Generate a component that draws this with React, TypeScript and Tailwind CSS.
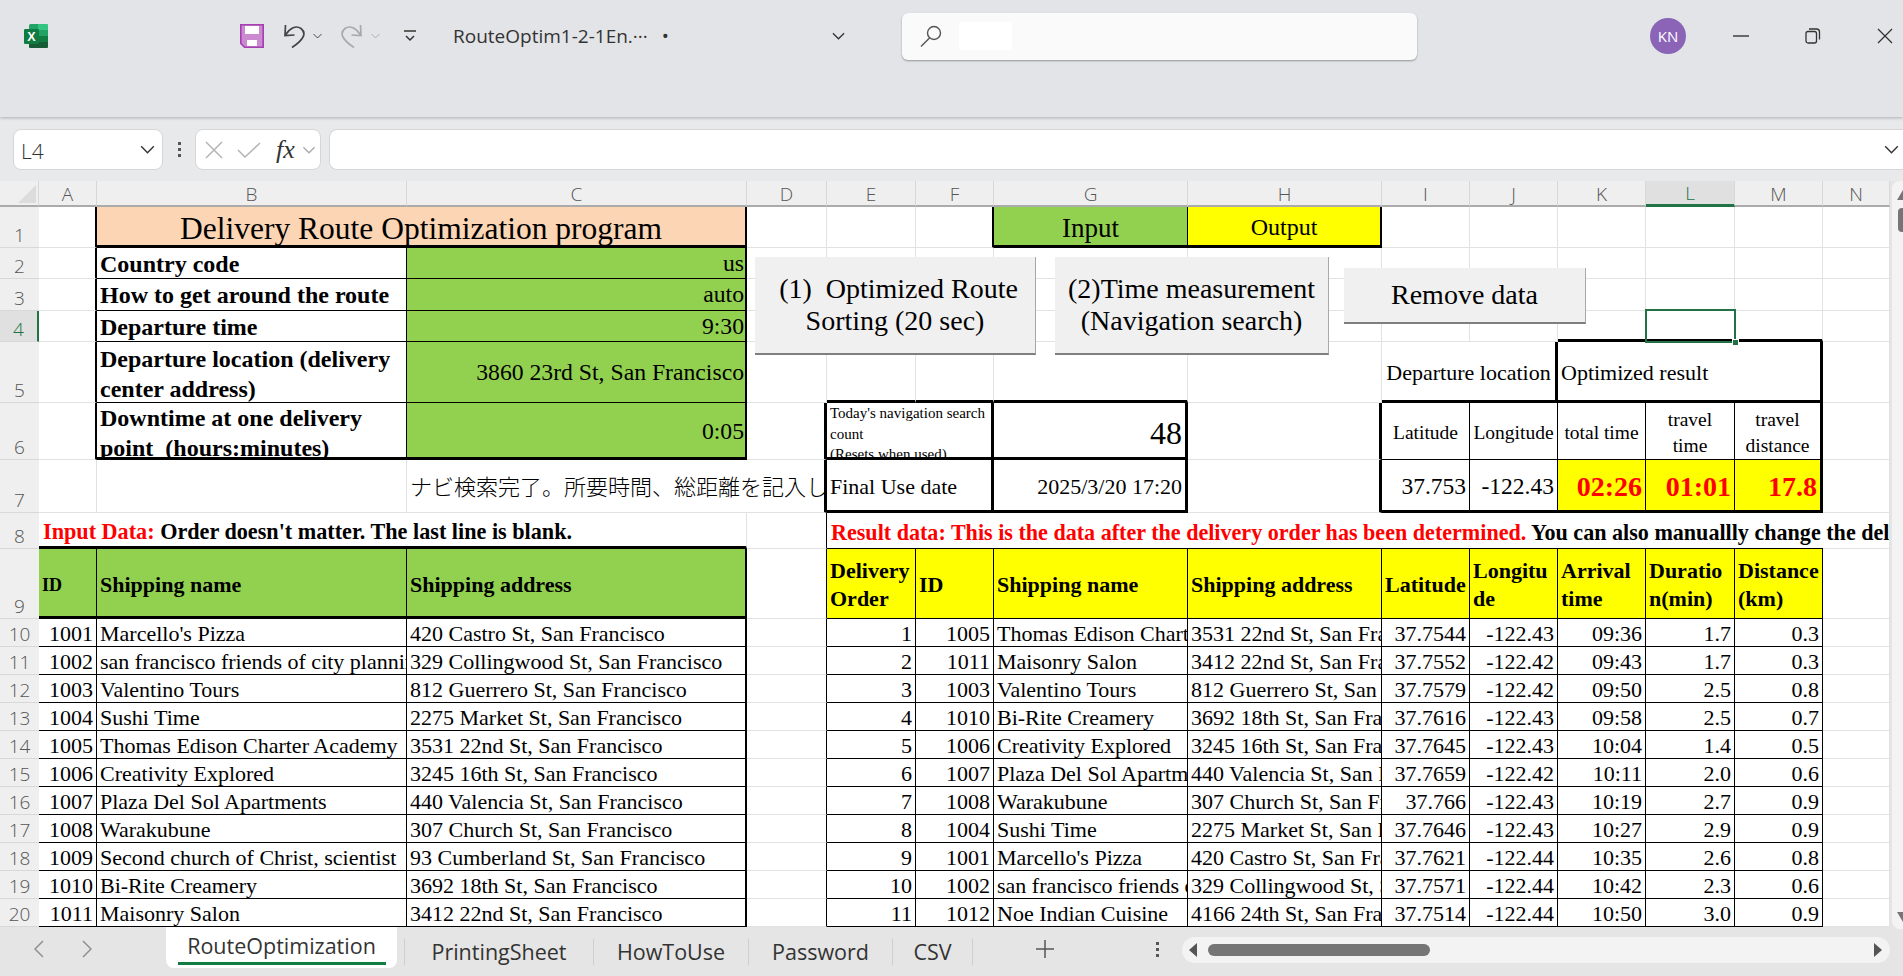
import { twMerge } from "tailwind-merge";
import type { ReactNode } from "react";

const ui = "font-['Open_Sans',sans-serif]";

// 1つのセル。罫線の既定値はシートの薄いグリッド線
function C({ className = "", children }: { className?: string; children?: ReactNode }) {
  return (
    <div
      className={twMerge(
        "flex items-center overflow-hidden whitespace-nowrap min-w-0 px-[3px] pt-[3px] text-[22px] leading-[28px] text-black border-r border-b border-[#e2e2e2]",
        className
      )}
    >
      {children}
    </div>
  );
}

function RowHead({ n, active }: { n: number; active?: boolean }) {
  return (
    <div
      className={twMerge(
        "flex items-end justify-center border-b border-[#d8d8d8] bg-[#efefef] text-[19px] leading-[24px] text-[#555] font-light overflow-hidden",
        ui,
        active && "bg-[#e0e0e0] text-[#217346] border-r-2 border-r-[#217346]"
      )}
    >
      {n}
    </div>
  );
}

function ColHead({ l, active }: { l: string; active?: boolean }) {
  return (
    <div
      className={twMerge(
        "flex items-center justify-center pt-[2px] border-r border-b-2 border-r-[#d8d8d8] border-b-[#ababab] bg-[#efefef] text-[19px] text-[#555] font-light",
        ui,
        active && "bg-[#e0e0e0] text-[#217346] border-b-[3px] border-b-[#217346]"
      )}
    >
      {l}
    </div>
  );
}

function Chevron({ className = "" }: { className?: string }) {
  return (
    <svg viewBox="0 0 16 10" className={className} fill="none" stroke="currentColor" strokeWidth="1.6">
      <path d="M1 1.5 8 8.5 15 1.5" />
    </svg>
  );
}

function ExcelLogo() {
  return (
    <svg viewBox="0 0 24 24" className="w-6 h-6 shrink-0">
      <rect x="5" y="0" width="19" height="24" rx="1.5" fill="#21a366" />
      <path d="M14 0h8.5A1.5 1.5 0 0 1 24 1.5V6H14z" fill="#33c481" />
      <rect x="14" y="12" width="10" height="6" fill="#107c41" />
      <path d="M5 18h19v4.5a1.5 1.5 0 0 1-1.5 1.5h-16A1.5 1.5 0 0 1 5 22.5z" fill="#185c37" />
      <rect x="0" y="5" width="15" height="15" rx="1.2" fill="#107c41" />
      <text x="7.5" y="17" textAnchor="middle" fontSize="12.5" fontWeight="700" fontFamily="Liberation Sans" fill="#fff">
        X
      </text>
    </svg>
  );
}

function SaveIcon() {
  return (
    <svg viewBox="0 0 24 24" className="w-6 h-6 shrink-0 ml-[192px]">
      <path d="M.8.8h22.4v22.4H4.5L.8 19.5z" fill="#cb8ad0" stroke="#a53eb0" strokeWidth="1.6" />
      <rect x="5" y="2" width="14" height="8" fill="#fff" />
      <rect x="7" y="16" width="10" height="6" fill="#fff" />
    </svg>
  );
}

function UndoIcon({ flip, color }: { flip?: boolean; color: string }) {
  return (
    <svg
      viewBox="0 0 24 24"
      className={twMerge("w-6 h-6 shrink-0", flip && "-scale-x-100")}
      fill="none"
      stroke={color}
      strokeWidth="1.7"
    >
      <path d="M2.5 1 2 11.5 11.5 11" />
      <path d="M2.5 11C7 4 13 1 18 4.5c5 4 4.5 10-9 19" />
    </svg>
  );
}

const green = "bg-[#92d050]";
const yellow = "bg-[#ffff00]";

const inputRows = [
  ["1001", "Marcello's Pizza", "420 Castro St, San Francisco"],
  ["1002", "san francisco friends of city planning", "329 Collingwood St, San Francisco"],
  ["1003", "Valentino Tours", "812 Guerrero St, San Francisco"],
  ["1004", "Sushi Time", "2275 Market St, San Francisco"],
  ["1005", "Thomas Edison Charter Academy", "3531 22nd St, San Francisco"],
  ["1006", "Creativity Explored", "3245 16th St, San Francisco"],
  ["1007", "Plaza Del Sol Apartments", "440 Valencia St, San Francisco"],
  ["1008", "Warakubune", "307 Church St, San Francisco"],
  ["1009", "Second church of Christ, scientist", "93 Cumberland St, San Francisco"],
  ["1010", "Bi-Rite Creamery", "3692 18th St, San Francisco"],
  ["1011", "Maisonry Salon", "3412 22nd St, San Francisco"],
];

const resultRows = [
  ["1", "1005", "Thomas Edison Charter Academy", "3531 22nd St, San Francisco", "37.7544", "-122.43", "09:36", "1.7", "0.3"],
  ["2", "1011", "Maisonry Salon", "3412 22nd St, San Francisco", "37.7552", "-122.42", "09:43", "1.7", "0.3"],
  ["3", "1003", "Valentino Tours", "812 Guerrero St, San Francisco", "37.7579", "-122.42", "09:50", "2.5", "0.8"],
  ["4", "1010", "Bi-Rite Creamery", "3692 18th St, San Francisco", "37.7616", "-122.43", "09:58", "2.5", "0.7"],
  ["5", "1006", "Creativity Explored", "3245 16th St, San Francisco", "37.7645", "-122.43", "10:04", "1.4", "0.5"],
  ["6", "1007", "Plaza Del Sol Apartments", "440 Valencia St, San Francisco", "37.7659", "-122.42", "10:11", "2.0", "0.6"],
  ["7", "1008", "Warakubune", "307 Church St, San Francisco", "37.766", "-122.43", "10:19", "2.7", "0.9"],
  ["8", "1004", "Sushi Time", "2275 Market St, San Francisco", "37.7646", "-122.43", "10:27", "2.9", "0.9"],
  ["9", "1001", "Marcello's Pizza", "420 Castro St, San Francisco", "37.7621", "-122.44", "10:35", "2.6", "0.8"],
  ["10", "1002", "san francisco friends of city planning", "329 Collingwood St, San Francisco", "37.7571", "-122.44", "10:42", "2.3", "0.6"],
  ["11", "1012", "Noe Indian Cuisine", "4166 24th St, San Francisco", "37.7514", "-122.44", "10:50", "3.0", "0.9"],
];

const settings = [
  { n: 2, label: "Country code", value: "us" },
  { n: 3, label: "How to get around the route", value: "auto" },
  { n: 4, label: "Departure time", value: "9:30" },
];

const colLetters = ["A", "B", "C", "D", "E", "F", "G", "H", "I", "J", "K", "L", "M", "N"];

const labelB = "border-r-black border-b-black font-bold text-[24px] pt-[1px]";
const valueC = "justify-end text-[23.7px] pr-[1px] pt-[1px] bg-[#92d050] border-r-2 border-r-black border-b-black";
const aEdge = "border-r-2 border-r-black";
const thickB = "border-b-[3px] border-b-black";
const thickR = "border-r-[3px] border-r-black";
const thinBox = "border-r-black border-b-black";
const small = "justify-center text-center text-[19.5px] leading-[26px]";
const btn =
  "absolute flex items-center justify-center text-center bg-[#f0f0f0] border-r border-b-2 border-r-[#a8a8a8] border-b-[#7f7f7f] text-[28px] leading-[32px] text-black";

function Sheet() {
  return (
    <div className="relative w-[1890px] h-[746px] overflow-hidden bg-white font-['Liberation_Serif',serif]">
      <div className="grid grid-cols-[39px_58px_310px_340px_80px_89px_78px_194px_194px_88px_88px_88px_89px_88px_67px] grid-rows-[26px_41px_31px_32px_31px_61px_57px_53px_36px_70px_repeat(11,28px)]">
        {/* 列見出し */}
        <div className="relative bg-[#efefef] border-r border-b-2 border-r-[#d8d8d8] border-b-[#ababab]">
          <svg viewBox="0 0 18 18" className="absolute left-[18px] top-[4px] w-[18px] h-[18px]">
            <path d="M18 0V18H0z" fill="#dcdcdc" />
          </svg>
        </div>
        {colLetters.map((l) => (
          <ColHead key={l} l={l} active={l === "L"} />
        ))}

        {/* 1行目 */}
        <RowHead n={1} />
        <C className={aEdge} />
        <C className={`col-span-2 justify-center bg-[#fcd5b4] pt-[5px] text-[31.5px] border-r-2 border-r-black ${thickB}`}>
          Delivery Route Optimization program
        </C>
        <C />
        <C />
        <C className={aEdge} />
        <C className={`${green} justify-center pt-[4px] text-[27px] border-r-black ${thickB}`}>Input</C>
        <C className={`${yellow} justify-center pt-[2px] text-[24px] ${aEdge} ${thickB}`}>Output</C>
        <C />
        <C />
        <C />
        <C />
        <C />
        <C />

        {/* 2〜4行目 */}
        {settings.map((s) => (
          <div key={s.n} className="contents">
            <RowHead n={s.n} active={s.n === 4} />
            <C className={aEdge} />
            <C className={labelB}>{s.label}</C>
            <C className={valueC}>{s.value}</C>
            <C />
            <C />
            <C />
            <C />
            <C />
            <C />
            <C />
            <C className={s.n === 4 ? thickB : ""} />
            <C className={s.n === 4 ? thickB : ""} />
            <C className={s.n === 4 ? thickB : ""} />
            <C />
          </div>
        ))}

        {/* 5行目 */}
        <RowHead n={5} />
        <C className={aEdge} />
        <C className={`${labelB} pt-[3px] leading-[30px]`}>
          <span>
            Departure location (delivery
            <br />
            center address)
          </span>
        </C>
        <C className={valueC}>3860 23rd St, San Francisco</C>
        <C />
        <C className={thickB} />
        <C className={thickB} />
        <C className={thickB} />
        <C />
        <C className={`col-span-2 justify-center text-[22px] ${thickR} ${thickB}`}>Departure location</C>
        <C className={`col-span-3 text-[22px] ${thickR} ${thickB}`}>Optimized result</C>
        <C />

        {/* 6行目 */}
        <RowHead n={6} />
        <C className={aEdge} />
        <C className={`${labelB} ${thickB} pt-[5px] leading-[30px]`}>
          <span>
            Downtime at one delivery
            <br />
            point&nbsp; (hours:minutes)
          </span>
        </C>
        <C className={`${valueC} pt-[3px] ${thickB}`}>0:05</C>
        <C className={thickR} />
        <C className={`col-span-2 items-start pt-0 whitespace-normal text-[15px] leading-[20.5px] ${thickR} ${thickB}`}>
          <span>
            Today's navigation search
            <br />
            count
            <br />
            (Resets when used)
          </span>
        </C>
        <C className={`justify-end pt-[5px] text-[32px] ${thickR} ${thickB}`}>48</C>
        <C className={thickR} />
        <C className={`${small} ${thinBox}`}>Latitude</C>
        <C className={`${small} ${thinBox}`}>Longitude</C>
        <C className={`${small} ${thinBox}`}>total time</C>
        <C className={`${small} whitespace-normal ${thinBox}`}>travel time</C>
        <C className={`${small} whitespace-normal border-b-black ${thickR}`}>
          <span>
            travel
            <br />
            distance
          </span>
        </C>
        <C />

        {/* 7行目 */}
        <RowHead n={7} />
        <C />
        <C />
        <C className="overflow-visible border-r-0 pt-0 pb-[2px] text-[22px] font-light font-['Noto_Sans_CJK_JP',sans-serif]">
          ナビ検索完了。所要時間、総距離を記入し
        </C>
        <C className={thickR} />
        <C className={`col-span-2 text-[22px] ${thickR} ${thickB}`}>Final Use date</C>
        <C className={`justify-end text-[22px] ${thickR} ${thickB}`}>2025/3/20 17:20</C>
        <C className={thickR} />
        <C className={`justify-end text-[23.5px] border-r-black ${thickB}`}>37.753</C>
        <C className={`justify-end text-[23.5px] border-r-black ${thickB}`}>-122.43</C>
        <C className={`${yellow} justify-end text-[28px] font-bold text-[#ff0000] border-r-black ${thickB}`}>02:26</C>
        <C className={`${yellow} justify-end text-[28px] font-bold text-[#ff0000] border-r-black ${thickB}`}>01:01</C>
        <C className={`${yellow} justify-end text-[28px] font-bold text-[#ff0000] ${thickR} ${thickB}`}>17.8</C>
        <C />

        {/* 8行目 */}
        <RowHead n={8} />
        <C className={`col-span-3 font-bold pl-[4px] pt-[5px] text-[22.2px] ${thickB}`}>
          <span>
            <span className="text-[#ff0000]">Input Data:</span> Order doesn't matter. The last line is blank.
          </span>
        </C>
        <C className="border-r-black" />
        <C className="col-span-9 overflow-visible font-bold pl-[4px] pt-[5px] text-[22.1px] border-r-0 border-b-black">
          <span>
            <span className="text-[#ff0000]">Result data: This is the data after the delivery order has been determined.</span> You can also manuallly change the delivery order
          </span>
        </C>
        <C />

        {/* 9行目 */}
        <RowHead n={9} />
        <C className={`${green} font-bold pt-[5px] text-[18px] border-r-black ${thickB}`}>ID</C>
        <C className={`${green} font-bold pt-[5px] border-r-black ${thickB}`}>Shipping name</C>
        <C className={`${green} font-bold pt-[5px] ${aEdge} ${thickB}`}>Shipping address</C>
        <C className="border-r-black" />
        {[
          <>Delivery<br />Order</>,
          <>ID</>,
          <>Shipping name</>,
          <>Shipping address</>,
          <>Latitude</>,
          <>Longitu<br />de</>,
          <>Arrival<br />time</>,
          <>Duratio<br />n(min)</>,
          <>Distance<br />(km)</>,
        ].map((h, i) => (
          <C key={i} className={`${yellow} font-bold ${thinBox}`}>
            <span>{h}</span>
          </C>
        ))}
        <C />

        {/* 10〜20行目 */}
        {inputRows.map((row, i) => (
          <div key={row[0]} className="contents">
            <RowHead n={i + 10} />
            <C className={`justify-end ${thinBox}`}>{row[0]}</C>
            <C className={thinBox}>{row[1]}</C>
            <C className={`${aEdge} border-b-black`}>{row[2]}</C>
            <C className="border-r-black" />
            {resultRows[i].map((v, j) => (
              <C key={j} className={`${j === 2 || j === 3 ? "" : "justify-end"} ${thinBox}`}>
                {v}
              </C>
            ))}
            <C />
          </div>
        ))}
      </div>

      {/* シート上のボタンと選択セル */}
      <button className={`${btn} left-[755px] top-[76px] w-[281px] h-[98px]`}>
        &nbsp;(1)&nbsp; Optimized Route
        <br />
        Sorting (20 sec)
      </button>
      <button className={`${btn} left-[1055px] top-[76px] w-[274px] h-[98px]`}>
        (2)Time measurement
        <br />
        (Navigation search)
      </button>
      <button className={`${btn} left-[1344px] top-[87px] w-[242px] h-[56px]`}>Remove data</button>
      <div className="absolute left-[1645px] top-[128px] w-[91px] h-[34px] border-2 border-[#217346]" />
      <div className="absolute left-[1732px] top-[158px] w-[7px] h-[7px] bg-[#217346] border border-white" />
    </div>
  );
}

function VScroll() {
  return (
    <div className="flex-1 h-[746px] bg-[#e5e5e5] pl-[2px]">
      <div className="relative h-[748px] bg-[#f3f3f3] rounded-l-lg overflow-hidden">
        <svg viewBox="0 0 12 10" className="absolute left-[5px] top-[9px] w-3 h-[10px]">
          <path d="M6 0 12 10H0z" fill="#757575" />
        </svg>
        <div className="absolute left-[6px] top-[27px] w-3 h-6 rounded-l bg-[#757575]" />
        <svg viewBox="0 0 12 10" className="absolute left-[5px] top-[731px] w-3 h-[10px]">
          <path d="M0 0H12L6 10z" fill="#757575" />
        </svg>
      </div>
    </div>
  );
}

function TabBar() {
  const tabs = [
    { t: "PrintingSheet", w: "w-[189px]" },
    { t: "HowToUse", w: "w-[155px]" },
    { t: "Password", w: "w-[144px]" },
    { t: "CSV", w: "w-[81px]" },
  ];
  return (
    <div className={`flex h-[49px] bg-[#e5e5e5] text-[#333] ${ui}`}>
      <div className="flex items-center h-[44px] pl-[34px] text-[#8f8f8f] gap-[38px] w-[166px] shrink-0">
        <svg viewBox="0 0 10 18" className="w-[10px] h-[18px]" fill="none" stroke="currentColor" strokeWidth="1.5">
          <path d="M9 1 1 9l8 8" />
        </svg>
        <svg viewBox="0 0 10 18" className="w-[10px] h-[18px]" fill="none" stroke="currentColor" strokeWidth="1.5">
          <path d="M1 1l8 8-8 8" />
        </svg>
      </div>
      <div className="flex flex-col items-center w-[231px] h-[41px] pt-[2px] bg-white rounded-b-lg shrink-0">
        <div className="text-[21.5px] leading-[34px] whitespace-nowrap">RouteOptimization</div>
        <div className="w-[208px] h-[3px] bg-[#107c41] -mt-px" />
      </div>
      <div className="flex items-center h-[38px] pt-[12px] ml-[7px] shrink-0">
        {tabs.map(({ t, w }) => (
          <div key={t} className={twMerge("flex items-center justify-center h-[26px] border-l border-[#cfcfcf] text-[21.5px] whitespace-nowrap last:border-r", w)}>
            {t}
          </div>
        ))}
      </div>
      <div className="w-[44px] h-[44px] ml-[50px] flex items-center justify-center shrink-0">
        <svg viewBox="0 0 18 18" className="w-[18px] h-[18px]" stroke="#555" strokeWidth="1.5">
          <path d="M9 0v18M0 9h18" />
        </svg>
      </div>
      <div className="w-[4px] h-[44px] ml-[88px] flex flex-col items-center justify-center gap-[3px] shrink-0">
        <div className="w-[3px] h-[3px] bg-[#555]" />
        <div className="w-[3px] h-[3px] bg-[#555]" />
        <div className="w-[3px] h-[3px] bg-[#555]" />
      </div>
      <div className="flex items-center w-[708px] h-[26px] mt-[10px] ml-[23px] pl-[7px] pr-[8px] bg-[#f3f3f3] rounded-[13px] shrink-0">
        <svg viewBox="0 0 8 14" className="w-2 h-[14px]">
          <path d="M8 0v14L0 7z" fill="#555" />
        </svg>
        <div className="w-[222px] h-3 ml-[11px] rounded-full bg-[#757575]" />
        <svg viewBox="0 0 8 14" className="w-2 h-[14px] ml-auto">
          <path d="M0 0v14l8-7z" fill="#555" />
        </svg>
      </div>
    </div>
  );
}

export default function App() {
  return (
    <div className={`w-[1903px] h-[976px] overflow-hidden flex flex-col bg-[#e5e5e5] ${ui}`}>
      {/* タイトルバー */}
      <div className="h-[117px] shrink-0 bg-[#e3e4e7] shadow-[0_1px_3px_rgba(0,0,0,0.25)] relative z-10">
        <div className="flex items-center h-[72px] pl-[24px] text-[#333]">
          <ExcelLogo />
          <SaveIcon />
          <div className="ml-[19px]">
            <UndoIcon color="#444" />
          </div>
          <Chevron className="w-[9px] h-[6px] ml-[6px] text-[#333]" />
          <div className="ml-[17px]">
            <UndoIcon flip color="#a9a9a9" />
          </div>
          <Chevron className="w-[9px] h-[6px] ml-[8px] text-[#a9a9a9]" />
          <svg viewBox="0 0 12 12" className="w-3 h-3 ml-[24px]" fill="none" stroke="#333" strokeWidth="1.5">
            <path d="M0 1h12M2 6l4 4 4-4" />
          </svg>
          <div className="ml-[37px] w-[225px] whitespace-nowrap text-[19px] text-[#333]">
            RouteOptim1-2-1En.···<span className="ml-[14px]">•</span>
          </div>
          <Chevron className="w-[15px] h-[8px] ml-[153px] text-[#333]" />
          <div className="flex items-center w-[515px] h-[47px] ml-[56px] pl-[18px] bg-[#fafafa] rounded-md shadow-[0_1px_2px_rgba(0,0,0,0.35)]">
            <svg viewBox="0 0 22 22" className="w-[22px] h-[22px]" fill="none" stroke="#555" strokeWidth="1.4">
              <circle cx="14" cy="8" r="6.5" />
              <path d="M9.5 13 1 21.5" />
            </svg>
            <div className="w-[53px] h-[28px] ml-[17px] bg-white" />
          </div>
          <div className="w-9 h-9 ml-[233px] rounded-full bg-[#8b64b8] text-white text-[15px] flex items-center justify-center">KN</div>
          <svg viewBox="0 0 16 2" className="w-[16px] h-[2px] ml-[47px]">
            <path d="M0 1h16" stroke="#333" strokeWidth="1.4" />
          </svg>
          <svg viewBox="0 0 16 16" className="w-[16px] h-[16px] ml-[56px]" fill="none" stroke="#333" strokeWidth="1.3">
            <rect x="1" y="3.5" width="10.5" height="11.5" rx="2" />
            <path d="M4 1h7.5a3 3 0 0 1 3 3v7.5" />
          </svg>
          <svg viewBox="0 0 16 16" className="w-[16px] h-[16px] ml-[56px]" fill="none" stroke="#333" strokeWidth="1.3">
            <path d="M1 1l14 14M15 1 1 15" />
          </svg>
        </div>
      </div>

      {/* 数式バー */}
      <div className="h-[64px] shrink-0 flex items-center pl-[13px] pt-[1px] bg-[#e8e9eb]">
        <div className="flex items-center justify-between w-[150px] h-[41px] pl-[7px] pr-[7px] bg-white border border-[#d6d6d6] rounded-lg">
          <span className="text-[21px] pt-[4px] font-light text-[#333]">L4</span>
          <Chevron className="w-[15px] h-[9px] text-[#333]" />
        </div>
        <div className="flex flex-col gap-[3px] mx-[14px] w-[4px] items-center">
          <div className="w-[3px] h-[3px] bg-[#555]" />
          <div className="w-[3px] h-[3px] bg-[#555]" />
          <div className="w-[3px] h-[3px] bg-[#555]" />
        </div>
        <div className="flex items-center w-[126px] h-[41px] pl-[9px] bg-white border border-[#d6d6d6] rounded-lg">
          <svg viewBox="0 0 18 18" className="w-[18px] h-[18px]" fill="none" stroke="#b4b4b4" strokeWidth="1.5">
            <path d="M1 1l16 16M17 1 1 17" />
          </svg>
          <svg viewBox="0 0 24 16" className="w-[24px] h-[16px] ml-[14px]" fill="none" stroke="#b4b4b4" strokeWidth="1.5">
            <path d="M1 8l7 7L23 1" />
          </svg>
          <span className="ml-[15px] text-[26px] italic leading-none text-[#333] font-['Liberation_Serif',serif]">fx</span>
          <Chevron className="w-[14px] h-[8px] ml-[7px] text-[#a9a9a9]" />
        </div>
        <div className="flex items-center justify-end flex-1 h-[41px] ml-[8px] pr-[4px] bg-white border border-r-0 border-[#d6d6d6] rounded-l-lg">
          <Chevron className="w-[15px] h-[9px] text-[#333]" />
        </div>
      </div>

      {/* シート本体 */}
      <div className="flex h-[746px] shrink-0">
        <Sheet />
        <VScroll />
      </div>

      <TabBar />
    </div>
  );
}
